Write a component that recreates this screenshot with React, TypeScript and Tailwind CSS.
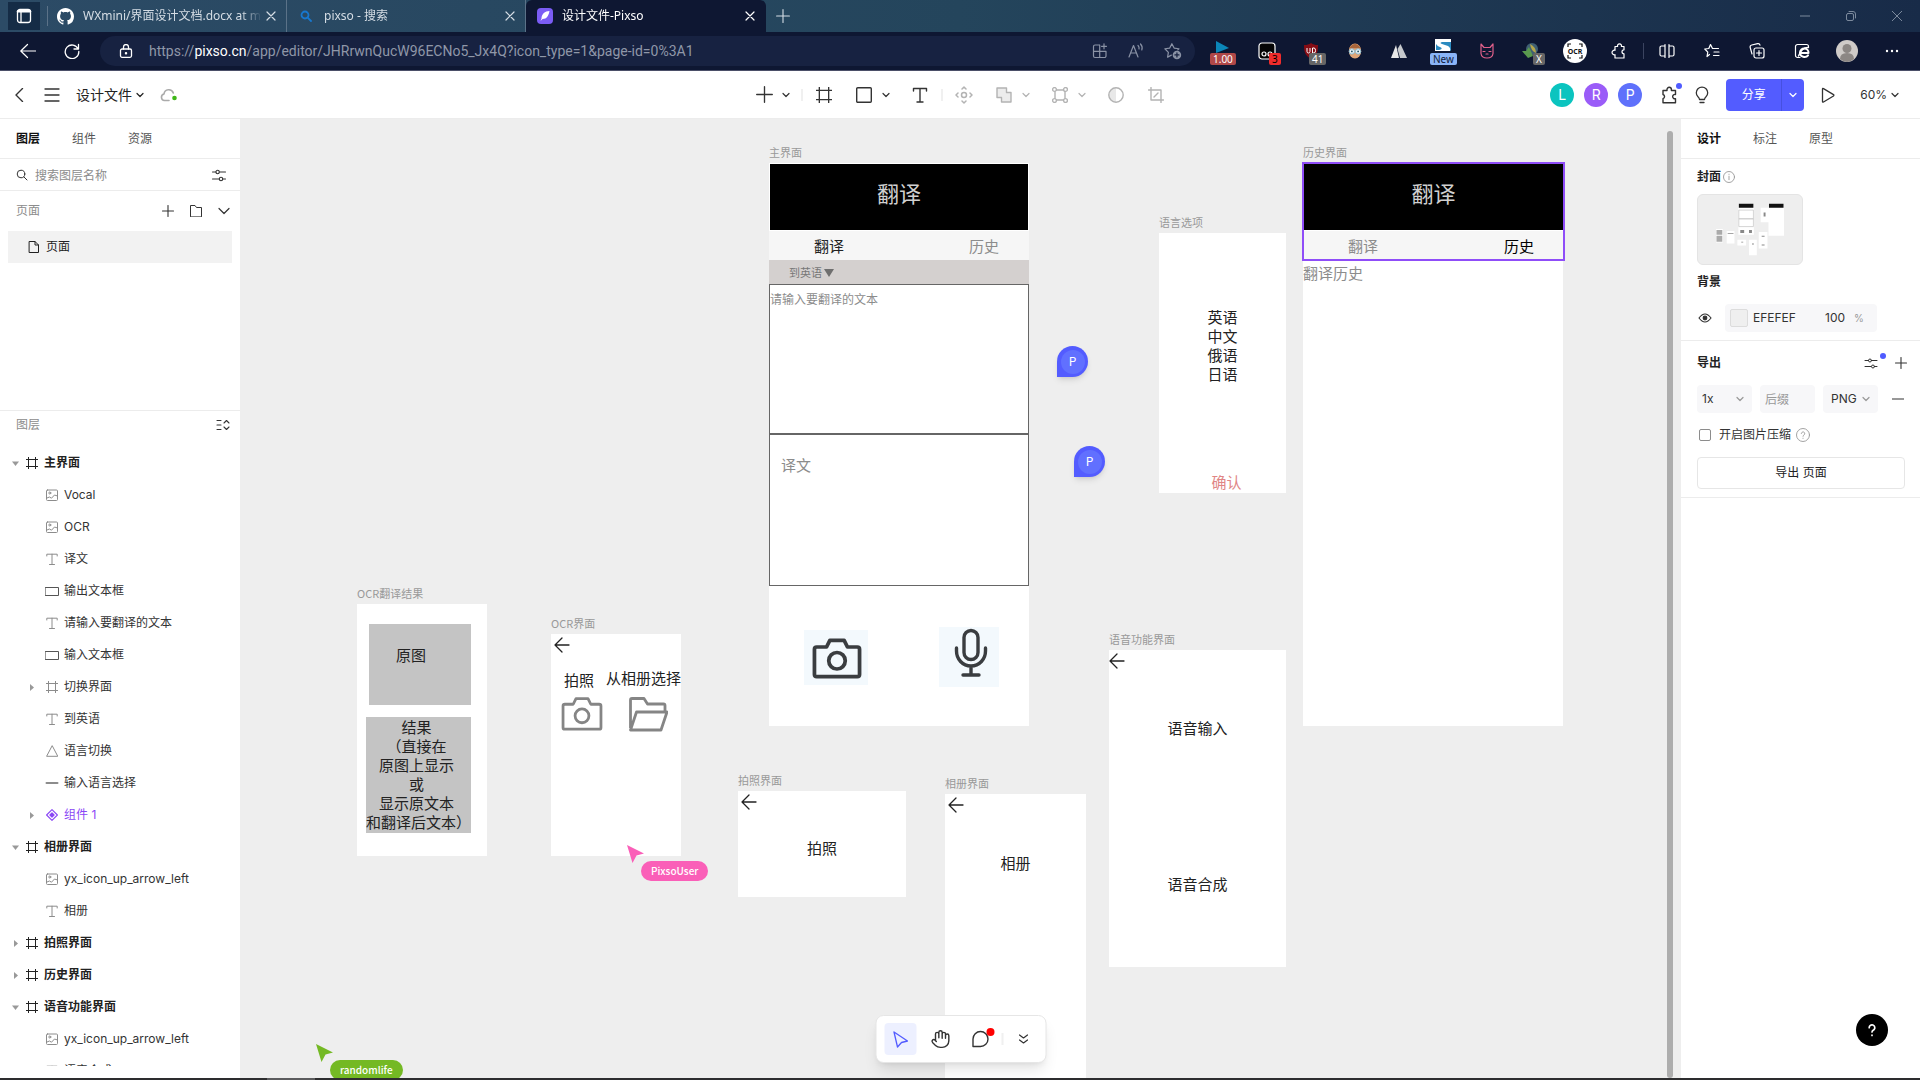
import React from "react";

type IconProps = { s?: number; vb?: number; sw?: number; className?: string; children: React.ReactNode };

function Icon({ s = 16, vb, sw = 1, className = "", children }: IconProps) {
  const v = vb ?? s;
  return (
    <svg
      width={s}
      height={s}
      viewBox={`0 0 ${v} ${v}`}
      fill="none"
      stroke="currentColor"
      strokeWidth={sw}
      strokeLinecap="round"
      strokeLinejoin="round"
      className={`shrink-0 ${className}`}
      aria-hidden="true"
    >
      {children}
    </svg>
  );
}

const Close = () => (
  <Icon s={10} sw={1.2}><path d="M1 1l8 8M9 1L1 9" /></Icon>
);
const Chevron = ({ className = "" }: { className?: string }) => (
  <Icon s={8} sw={1.2} className={className}><path d="M1 2.5l3 3 3-3" /></Icon>
);
const WideChevron = ({ className = "" }: { className?: string }) => (
  <Icon s={12} sw={1.2} className={className}><path d="M1 3.5l5 5 5-5" /></Icon>
);
const Plus = ({ s = 12 }: { s?: number }) => (
  <Icon s={s} vb={12} sw={s > 12 ? 0.95 : 1.1}><path d="M6 .5v11M.5 6h11" /></Icon>
);
const FrameIcon = ({ s = 12, sw = 1 }: { s?: number; sw?: number }) => (
  <Icon s={s} vb={12} sw={sw}><path d="M2.5 0v12M9.5 0v12M0 2.5h12M0 9.5h12" /></Icon>
);
const ImageIcon = () => (
  <Icon s={12}>
    <rect x=".5" y="1" width="11" height="10.5" rx="1" />
    <circle cx="3.8" cy="4" r="1" />
    <path d="M1 9l2.5-1 2 1.2 3-3.2 3 1" />
  </Icon>
);
const TextIcon = () => (
  <Icon s={12}><path d="M.8 3V1.2h10.4V3M6 1.2v10.3M3.5 11.5h5" /></Icon>
);
const RectIcon = () => (
  <Icon s={14} sw={1}><rect x=".5" y="3.500" width="13" height="8" /></Icon>
);
const TriIcon = () => (
  <Icon s={12}><path d="M6 1L.6 11.3h10.8z" /></Icon>
);
const LineIcon = () => (
  <Icon s={14} sw={2}><path d="M1.5 7h11" /></Icon>
);
const ComponentIcon = () => (
  <Icon s={12} sw={1.1}>
    <path d="M6 .6L11.4 6 6 11.4.6 6z" />
    <path d="M6 3.9L8.1 6 6 8.1 3.9 6z" fill="currentColor" />
  </Icon>
);
const SettingsIcon = () => (
  <Icon s={14} sw={1.1}>
    <path d="M.5 4H4M7.5 4h6M.5 11h6.700M10.700 11h2.800" />
    <circle cx="5.600" cy="4" r="1.700" />
    <circle cx="9" cy="11" r="1.700" />
  </Icon>
);
const BackArrow = ({ className = "" }: { className?: string }) => (
  <Icon s={16} sw={1.3} className={className}><path d="M15 8H1M8 1L1 8l7 7" /></Icon>
);
const PuzzleShape = () => (
  <path d="M5 4.500h2.600a2 2 0 113.800 0H14v3.300a2 2 0 100 4V16H5v-3.300a2.300 2.300 0 110-4.400z" />
);

/* ---------- browser chrome ---------- */

function Tab({ icon, title, active = false }: { icon: React.ReactNode; title: string; active?: boolean }) {
  return (
    <div
      className={
        active
          ? "flex h-8 w-60 items-center rounded-t-md bg-[#0e1732] pr-[11px] pl-[11px] text-white"
          : "flex h-8 w-[239px] items-center border-r border-[#5b7288] pr-[10px] pl-[9px] text-[#d5dde5]"
      }
    >
      {icon}
      <button className="ml-[9px] h-5 min-w-0 flex-1 overflow-hidden text-left text-xs leading-5 whitespace-nowrap [mask-image:linear-gradient(to_right,black_88%,transparent)]">
        {title}
      </button>
      <button aria-label="关闭标签页" className="ml-1"><Close /></button>
    </div>
  );
}

function Badge({ text, className }: { text: string; className: string }) {
  return (
    <span className={`absolute rounded-xs px-[3px] text-[10px] leading-[12px] ${className}`}>{text}</span>
  );
}

function Ext({ label, children }: { label: string; children: React.ReactNode }) {
  return (
    <button aria-label={label} className="relative flex h-[38px] w-11 items-center justify-center text-white">
      {children}
    </button>
  );
}

function BrowserChrome() {
  return (
    <header className="shrink-0 font-['Noto_Sans','Noto_Sans_CJK_SC',sans-serif]">
      <div className="flex h-8 items-center bg-linear-to-r from-[#2c4b66] via-[#24455c] to-[#182b48]">
        <button aria-label="标签页操作" className="ml-2 flex h-7 w-8 items-center justify-center bg-[#152c46] text-white">
          <Icon s={16} sw={1.3}>
            <rect x="1.500" y="1.500" width="13" height="13" rx="2.500" />
            <path d="M2 3.200h12" strokeWidth="2.400" />
            <path d="M5 4v10" />
          </Icon>
        </button>
        <span className="ml-[7px] h-5 w-px bg-[#5b7288]" />
        <Tab
          title="WXmini/界面设计文档.docx at m"
          icon={
            <svg width="17" height="17" viewBox="0 0 16 16" fill="white" aria-hidden="true" className="shrink-0">
              <path d="M8 0C3.580 0 0 3.580 0 8c0 3.540 2.290 6.530 5.470 7.590.4.070.550-.170.550-.380 0-.190-.010-.820-.010-1.490-2.010.370-2.530-.490-2.690-.940-.090-.230-.480-.940-.820-1.130-.280-.150-.680-.520-.010-.530.630-.010 1.080.580 1.230.820.720 1.210 1.870.870 2.330.660.070-.520.280-.870.510-1.070-1.780-.200-3.640-.890-3.640-3.950 0-.870.310-1.590.820-2.150-.080-.200-.360-1.020.080-2.120 0 0 .670-.210 2.200.820.640-.180 1.320-.270 2-.270s1.360.090 2 .270c1.530-1.040 2.200-.820 2.200-.820.440 1.100.160 1.920.080 2.120.510.560.820 1.270.820 2.150 0 3.070-1.870 3.750-3.650 3.950.290.250.540.730.540 1.480 0 1.070-.010 1.930-.010 2.200 0 .210.150.460.550.380A8.010 8.010 0 0016 8c0-4.420-3.580-8-8-8z" />
            </svg>
          }
        />
        <Tab
          title="pixso - 搜索"
          icon={
            <Icon s={12} sw={1.800} className="mx-[3px] ml-[4px] text-[#1878cf]">
              <circle cx="5" cy="5" r="3.500" />
              <path d="M7.700 7.700l3.300 3.300" />
            </Icon>
          }
        />
        <Tab
          active
          title="设计文件-Pixso"
          icon={
            <svg width="16" height="16" viewBox="0 0 16 16" aria-hidden="true" className="shrink-0">
              <rect width="16" height="16" rx="4" fill="#7b5cf5" />
              <path d="M12.500 3C8 3 4.500 6 4.500 10.500L3.500 13l2-2c4.500 0 6-3.500 7-8z" fill="white" />
            </svg>
          }
        />
        <button aria-label="新建标签页" className="ml-[10px] text-[#d5dde5]"><Plus s={14} /></button>
        <div className="ml-auto flex items-center gap-9 pr-[18px] text-[#7c8a9d]">
          <button aria-label="最小化"><Icon s={10}><path d="M0 5h10" /></Icon></button>
          <button aria-label="还原">
            <Icon s={10}><rect x=".5" y="2.500" width="7" height="7" rx="1.500" /><path d="M3 .5h4a2.500 2.500 0 012.500 2.500v4" /></Icon>
          </button>
          <button aria-label="关闭"><Icon s={10}><path d="M0 0l10 10M10 0L0 10" /></Icon></button>
        </div>
      </div>

      <div className="flex h-[39px] items-center border-b border-[#4b4f68] bg-[#0e1732] pr-[6px] text-white">
        <button aria-label="后退" className="ml-5"><Icon s={16} sw={1.200}><path d="M15.500 8H.8M7.500 1.500L.8 8l6.700 6.500" /></Icon></button>
        <button aria-label="刷新" className="ml-7"><Icon s={16} sw={1.300}><path d="M14.200 6A6.800 6.800 0 1014.800 8.500M14.500 1.500V6H10" /></Icon></button>
        <div className="ml-5 flex h-[30px] min-w-0 flex-1 items-center rounded-full bg-[#172241] pr-[13px] pl-[19px]">
          <Icon s={14} sw={1.300}>
            <rect x="1.500" y="5" width="11" height="8.300" rx="1.500" />
            <path d="M4.500 5V3a2.500 2.500 0 015 0v2" />
            <circle cx="7" cy="9.200" r=".6" fill="currentColor" />
          </Icon>
          <p className="ml-4 flex-1 truncate font-['Roboto',sans-serif] text-sm leading-5 text-[#8f97a8]">
            https://<span className="text-white">pixso.cn</span>/app/editor/JHRrwnQucW96ECNo5_Jx4Q?icon_type=1&amp;page-id=0%3A1
          </p>
          <div className="flex items-center gap-5 text-[#8a92a5]">
            <Icon s={16} sw={1.200}><path d="M7.500 2H3a1.500 1.500 0 00-1.500 1.500V13A1.500 1.500 0 003 14.500h9.500A1.500 1.500 0 0014 13V8.300H1.500M7.700 2v12.500M12 .8v5M9.500 3.300h5" /></Icon>
            <Icon s={16} sw={1.200}><path d="M1 14L5.500 2.500 10 14M2.600 10h5.800M10 2.500c1 1 1.300 2.300 1 3.500M12.500 1c1.700 1.800 2 4 1.300 6" /></Icon>
            <Icon s={18} vb={16} sw={1.100}>
              <path d="M6.500 11.700L3.200 13.500l.7-4.300L.8 6l4.300-.6L7 1.500l2 3.900 4.300.6-1 1" />
              <circle cx="11.500" cy="11.500" r="3.800" fill="#8a92a5" stroke="none" />
              <path d="M11.500 9.700v3.600M9.700 11.500h3.600" stroke="#172241" />
            </Icon>
          </div>
        </div>

        <div className="ml-[6px] flex">
          <Ext label="视频倍速">
            <svg width="14" height="12" viewBox="0 0 14 12" className="mb-2"><path d="M0 0l13 7-13 5z" fill="#0b86b8" /></svg>
            <Badge text="1.00" className="top-[21px] left-[9px] bg-[#b04848]" />
          </Ext>
          <Ext label="脚本管理">
            <Icon s={18} sw={1.200}>
              <rect x="1" y="1" width="16" height="16" rx="3" fill="#050505" />
              <circle cx="6" cy="12" r="2" /><circle cx="12" cy="12" r="2" />
            </Icon>
            <Badge text="3" className="top-[21px] left-6 bg-[#f02c2c] text-black" />
          </Ext>
          <Ext label="广告拦截">
            <svg width="16" height="16" viewBox="0 0 16 16">
              <path d="M8 0c2 1.500 4 2 7 2 0 6-.5 10-7 14C1.500 12 1 8 1 2c3 0 5-.5 7-2z" fill="#850c14" />
              <path d="M4 5v3.500q0 1.500 1.500 1.500T7 8.500V5M9.500 5v5h1.500q1.500 0 1.500-2.500T11 5z" fill="none" stroke="white" />
            </svg>
            <Badge text="41" className="top-[21px] left-5 bg-[#666]" />
          </Ext>
          <Ext label="护目镜">
            <svg width="16" height="16" viewBox="0 0 18 18">
              <ellipse cx="9" cy="9" rx="7" ry="8.500" fill="#e0a577" />
              <path d="M2.500 6Q9-4 15.500 6z" fill="#a8653a" />
              <circle cx="5.500" cy="9.500" r="3" fill="#eef4f6" stroke="#7fb4cc" /><circle cx="12.500" cy="9.500" r="3" fill="#eef4f6" stroke="#7fb4cc" />
              <circle cx="5.500" cy="9.500" r="1" fill="#256" /><circle cx="12.500" cy="9.500" r="1" fill="#256" />
            </svg>
          </Ext>
          <Ext label="山峰">
            <svg width="16" height="14" viewBox="0 0 16 14"><path d="M5 1l3 13H0z" fill="#e8e8e8" /><path d="M9.500 0L16 14H9L6.500 5z" fill="#c5c8cc" /></svg>
          </Ext>
          <Ext label="翻译助手">
            <svg width="16" height="12" viewBox="0 0 16 12" className="mb-3"><rect width="16" height="12" rx="1" fill="#2a8ac0" /><path d="M0 0h16v3H7q-3 1 0 2l6 2q3 2 2 5H0z" fill="#fff" /><path d="M1 5q1 2 5 3.500 2 1.500-2 2.500H1z" fill="#2a8ac0" /></svg>
            <Badge text="New" className="top-[21px] left-[9px] bg-[#8ab4f8] text-[#10203c]" />
          </Ext>
          <Ext label="猫抓">
            <Icon s={16} sw={1.200} className="text-[#e0608a]">
              <path d="M2 1l3 3.500h6L14 1v9.500Q13.500 15 8 15t-6-4.500zM4 8.500h2M10 8.500h2" />
              <path d="M7 11h2" />
            </Icon>
          </Ext>
          <Ext label="下载管理">
            <svg width="18" height="16" viewBox="0 0 18 16"><circle cx="10" cy="6" r="6" fill="#3f5f73" /><path d="M8 1q6 3 6 9-5-2-6-9" fill="#b5a64a" /><path d="M0 8h4L7 4l4 9-5 2z" fill="#5a9a4f" /></svg>
            <Badge text="X" className="top-[21px] left-6 bg-[#666]" />
          </Ext>
          <Ext label="文字识别">
            <span className="flex size-6 items-center justify-center rounded-full bg-white text-[#111]">
              <svg width="18" height="18" viewBox="0 0 18 18" fill="none" stroke="#111" strokeWidth="1.200">
                <path d="M2 5V2h3M13 2h3v3M16 13v3h-3M5 16H2v-3" />
                <text x="9" y="11.500" fontSize="7" fontWeight="700" textAnchor="middle" fill="#111" stroke="none">OCR</text>
              </svg>
            </span>
          </Ext>
          <Ext label="扩展"><Icon s={18} sw={1.200}><PuzzleShape /></Icon></Ext>
        </div>
        <span className="ml-[2px] h-4 w-px bg-[#3b4460]" />
        <div className="flex">
          {[
            ["分屏", <><path d="M6 3H2.500A1.500 1.500 0 001 4.500v7A1.500 1.500 0 002.500 13H6M10 3h3.500A1.500 1.500 0 0115 4.500v7a1.500 1.500 0 01-1.500 1.500H10M6 3v10M10 3v10M6 1.500v13M10 1.500v13" /></>],
            ["收藏夹", <><path d="M5.500 11.500L3 13.500l.8-4.300L.8 6l4-.5L6.500 1.500l2 4h6M10 9h5M9.500 12.500H15" /></>],
            ["集锦", <><rect x="5" y="5" width="10" height="10" rx="2" /><path d="M10 7.500v5M7.500 10h5M3 11L1.200 4.500A2 2 0 012.700 2l6-1.300A2 2 0 0111 2.200" /></>],
            ["IE 模式", <><path d="M6 14.500H3.500a2 2 0 01-2-2v-9a2 2 0 012-2h9a2 2 0 012 2" /><path d="M6 10h8.500a4.200 4.200 0 00-8.500-.5c0 5 6 5.500 8 2.800" strokeWidth="2" /><path d="M14.500 4.500Q8 4 4.500 13" strokeWidth="1.400" /></>],
          ].map(([label, d]) => (
            <button key={label as string} aria-label={label as string} className="flex h-[38px] w-[45px] items-center justify-center">
              <Icon s={16} sw={1.200}>{d}</Icon>
            </button>
          ))}
          <button aria-label="用户" className="flex h-[38px] w-[45px] items-center justify-center">
            <svg width="22" height="22" viewBox="0 0 22 22"><circle cx="11" cy="11" r="11" fill="#cfcbc8" /><circle cx="11" cy="8.500" r="4.500" fill="#8c8784" /><path d="M4 19q0-6 7-6t7 6q-7 6-14 0z" fill="#8c8784" /></svg>
          </button>
          <button aria-label="更多" className="flex h-[38px] w-[45px] items-center justify-center">
            <Icon s={14}><g fill="currentColor" stroke="none"><circle cx="2" cy="7" r="1.200" /><circle cx="7" cy="7" r="1.200" /><circle cx="12" cy="7" r="1.200" /></g></Icon>
          </button>
        </div>
      </div>
    </header>
  );
}

/* ---------- editor header ---------- */

function Tool({ label, children, className = "" }: { label: string; children: React.ReactNode; className?: string }) {
  return <button aria-label={label} className={`flex size-8 items-center justify-center ${className}`}>{children}</button>;
}
function ToolMenu({ label }: { label: string }) {
  return <button aria-label={label} className="flex w-3 justify-center"><Chevron /></button>;
}

function Avatar({ letter, className }: { letter: string; className: string }) {
  return <span className={`flex size-6 items-center justify-center rounded-full text-sm text-white ${className}`}>{letter}</span>;
}

function EditorHeader() {
  return (
    <div className="grid h-12 shrink-0 grid-cols-[1fr_auto_1fr] items-center border-b border-[#ececec] bg-white text-[#333]">
      <div className="flex items-center pl-[13px]">
        <button aria-label="返回"><Icon s={14} sw={1.400}><path d="M9.500.5L3 7l6.500 6.500" /></Icon></button>
        <button aria-label="菜单" className="ml-[17px]"><Icon s={16} sw={1.300}><path d="M1 2h14M1 8h14M1 14h14" /></Icon></button>
        <button className="ml-4 flex items-center gap-1 text-sm leading-5 text-[#222]">设计文件 <Chevron /></button>
        <Icon s={18} sw={1.600} className="ml-4 text-[#aaa]">
          <path d="M9 14.500H4.500A3.300 3.300 0 014 8a4.800 4.800 0 019.300-1" />
          <circle cx="14.500" cy="12" r="2.300" fill="#3fb618" stroke="none" />
        </Icon>
      </div>
      <div className="flex items-center">
        <Tool label="添加"><Plus s={17} /></Tool><ToolMenu label="添加选项" />
        <span className="mx-[9px] mr-[5px] h-3 w-[2px] bg-[#f0f0f0]" />
        <Tool label="画板"><FrameIcon s={16} sw={1} /></Tool>
        <Tool label="矩形" className="ml-2"><Icon s={16} sw={1.400}><rect x=".7" y=".7" width="14.600" height="14.600" rx="1" /></Icon></Tool><ToolMenu label="形状选项" />
        <Tool label="文本" className="ml-3"><Icon s={16} sw={1.400}><path d="M1.500 4V1.500h13V4M8 1.500v13.500M5 15h6" /></Icon></Tool>
        <span className="mx-[5px] h-3 w-[2px] bg-[#f0f0f0]" />
        <div className="flex items-center text-[#b3b3b3]">
          <Tool label="组件"><Icon s={18} sw={1.500}><circle cx="9" cy="9" r="2.500" /><path d="M7 3l2-2 2 2M7 15l2 2 2-2M3 7L1 9l2 2M15 7l2 2-2 2" /></Icon></Tool>
          <Tool label="布尔运算" className="ml-2"><Icon s={16} sw={1.400}><path d="M1 1h9.500v4.500H15V15H5.500v-4.500H1z" fill="#ececec" /></Icon></Tool><ToolMenu label="布尔运算选项" />
          <Tool label="编辑对象" className="ml-3"><Icon s={16} sw={1.400}><path d="M3 4v8M13 4v8M4 3h8M4 13h8" /><g fill="white"><circle cx="2.500" cy="2.500" r="1.900" /><circle cx="13.500" cy="2.500" r="1.900" /><circle cx="2.500" cy="13.500" r="1.900" /><circle cx="13.500" cy="13.500" r="1.900" /></g></Icon></Tool><ToolMenu label="编辑选项" />
          <Tool label="蒙版" className="ml-3"><Icon s={16} sw={1.400}><path d="M8 1a7 7 0 000 14z" fill="#e8e8e8" stroke="none" /><circle cx="8" cy="8" r="7.200" /></Icon></Tool>
          <Tool label="裁剪" className="ml-2"><Icon s={16} sw={1.400}><path d="M3 .5V13h12.500M.5 3H13v12.500M6 10l4-4" /></Icon></Tool>
        </div>
      </div>
      <div className="flex items-center justify-end pr-[21px]">
        <div className="flex gap-[10px]">
          <Avatar letter="L" className="bg-[#0bc4bf]" />
          <Avatar letter="R" className="bg-[#9a5cf8]" />
          <Avatar letter="P" className="bg-[#5f71fb]" />
        </div>
        <button aria-label="插件" className="relative ml-[19px]">
          <Icon s={18} sw={1.400}><path d="M2 4.500h4V3.500a2.200 2.200 0 014.400 0v1h4.100v4a2.200 2.200 0 100 4.200v4H2v-4a2.200 2.200 0 000-4.200z" /></Icon>
          <span className="absolute -top-[3px] -right-[3px] size-[6px] rounded-full bg-[#4f5bff]" />
        </button>
        <button aria-label="提示" className="ml-[14px]">
          <Icon s={18} sw={1.300}><path d="M6.500 13.500Q6.300 12 5 10.800a5.700 5.700 0 118 0Q11.700 12 11.500 13.500zM7 16.500h4" /></Icon>
        </button>
        <div className="ml-[15px] flex h-8 overflow-hidden rounded bg-[#535cff] text-white">
          <button className="w-[55px] text-xs">分享</button>
          <button aria-label="分享选项" className="flex w-[23px] items-center justify-center border-l border-[#4650e0]"><Chevron /></button>
        </div>
        <button aria-label="演示" className="ml-4"><Icon s={16} sw={1.300}><path d="M2.500 2v12.500q0 1 1 .5l10-6q.8-.7 0-1.400l-10-6q-1-.5-1 .4z" /></Icon></button>
        <button className="ml-6 flex items-center gap-1 text-xs leading-4">60%<Chevron /></button>
      </div>
    </div>
  );
}

/* ---------- left panel ---------- */

type Layer = { name: string; kind: string; root?: boolean; open?: boolean; closed?: boolean };
const layers: Layer[] = [
  { name: "主界面", kind: "frame", root: true, open: true },
  { name: "Vocal", kind: "image" },
  { name: "OCR", kind: "image" },
  { name: "译文", kind: "text" },
  { name: "输出文本框", kind: "rect" },
  { name: "请输入要翻译的文本", kind: "text" },
  { name: "输入文本框", kind: "rect" },
  { name: "切换界面", kind: "frame", closed: true },
  { name: "到英语", kind: "text" },
  { name: "语言切换", kind: "tri" },
  { name: "输入语言选择", kind: "line" },
  { name: "组件 1", kind: "component", closed: true },
  { name: "相册界面", kind: "frame", root: true, open: true },
  { name: "yx_icon_up_arrow_left", kind: "image" },
  { name: "相册", kind: "text" },
  { name: "拍照界面", kind: "frame", root: true, closed: true },
  { name: "历史界面", kind: "frame", root: true, closed: true },
  { name: "语音功能界面", kind: "frame", root: true, open: true },
  { name: "yx_icon_up_arrow_left", kind: "image" },
  { name: "语音合成", kind: "text" },
];
const kindIcon: Record<string, React.ReactNode> = {
  frame: <FrameIcon />,
  image: <ImageIcon />,
  text: <TextIcon />,
  rect: <RectIcon />,
  tri: <TriIcon />,
  line: <LineIcon />,
  component: <ComponentIcon />,
};

function LayerRow({ layer }: { layer: Layer }) {
  const { root, open, closed, kind, name } = layer;
  const comp = kind === "component";
  return (
    <li className={`flex h-8 items-center ${root ? "pl-3" : "pl-[28px]"}`}>
      <span className="flex w-3 text-[#999]">
        {open && <svg width="7" height="5" viewBox="0 0 7 5"><path d="M0 .5h7L3.500 5z" fill="currentColor" /></svg>}
        {closed && <svg width="7" height="7" viewBox="0 0 7 7"><path d="M2 0l4 3.500L2 7z" fill="currentColor" /></svg>}
      </span>
      <span className={`flex w-4 justify-center ${comp ? "text-[#8a46f5]" : root ? "text-[#222]" : kind === "rect" ? "text-[#555]" : "text-[#8c8c8c]"} ${root ? "" : "ml-1"}`}>
        {kindIcon[kind]}
      </span>
      <button className={`ml-1 text-xs leading-4 ${root ? "font-bold text-[#222]" : comp ? "text-[#8a46f5]" : "text-[#333]"}`}>{name}</button>
    </li>
  );
}

function LeftPanel() {
  return (
    <aside className="flex w-60 shrink-0 flex-col bg-white text-xs leading-4 text-[#333]">
      <nav className="flex h-10 shrink-0 items-center gap-8 border-b border-[#ececec] pl-4 text-[#555]">
        <button className="font-bold text-[#111]">图层</button>
        <button>组件</button>
        <button>资源</button>
      </nav>
      <div className="flex h-8 shrink-0 items-center border-b border-[#ececec] pr-[14px] pl-4">
        <Icon s={12}><circle cx="5" cy="5" r="3.800" /><path d="M8 8l3 3" /></Icon>
        <input aria-label="搜索图层名称" placeholder="搜索图层名称" className="ml-[7px] min-w-0 flex-1 pt-[2px] outline-none placeholder:text-[#8c8c8c]" />
        <button aria-label="筛选"><SettingsIcon /></button>
      </div>
      <section className="h-[220px] shrink-0 border-b border-[#ececec]">
        <div className="flex h-10 items-center pr-[10px] pl-4">
          <h2 className="flex-1 text-[#8c8c8c]">页面</h2>
          <button aria-label="新建页面" className="mr-4"><Plus s={12} /></button>
          <button aria-label="新建文件夹" className="mr-4"><Icon s={12}><path d="M.5 11.500v-11h4.500l1.500 2h5v9z" /></Icon></button>
          <button aria-label="折叠"><WideChevron /></button>
        </div>
        <button className="mx-2 flex h-8 w-[224px] items-center gap-[6px] bg-[#f2f2f2] pl-5 text-[#222]">
          <Icon s={12}><path d="M1.500.5H7l3.500 3.500v7.500h-9zM7 .5V4h3.500" /></Icon>
          页面
        </button>
      </section>
      <div className="flex h-9 shrink-0 items-center pr-[10px] pb-2 pl-4">
        <h2 className="flex-1 text-[#8c8c8c]">图层</h2>
        <button aria-label="全部折叠"><Icon s={14} sw={1.100}><path d="M1 2.500h4M1 7h4M1 11.500h4M8 5l2.500-2.500L13 5M8 9l2.500 2.500L13 9" /></Icon></button>
      </div>
      <ul className="mb-3 min-h-0 flex-1 overflow-hidden">
        {layers.map((l, i) => <LayerRow key={i} layer={l} />)}
      </ul>
    </aside>
  );
}

/* ---------- canvas ---------- */

function Artboard({ label, place, body, children }: { label: string; place: string; body: string; children: React.ReactNode }) {
  return (
    <section className={`absolute ${place}`}>
      <h3 className="h-5 text-[11px] leading-[18px] whitespace-nowrap text-[#999]">{label}</h3>
      <div className={`bg-white ${body}`}>{children}</div>
    </section>
  );
}

function AppBar({ history = false }: { history?: boolean }) {
  return (
    <>
      <div className="mx-px mb-px h-[67px] border-t border-white bg-black pt-[13px] text-center text-[22px] leading-[30px] text-[#d0d0d0]">翻译</div>
      <div className={`flex h-[29px] items-center justify-between bg-[#f6f6f6] pr-[30px] pl-[45px] ${history ? "text-[#8c8c8c]" : "text-[#222]"}`}>
        <span>翻译</span>
        <span className={history ? "text-black" : "text-[#8c8c8c]"}>历史</span>
      </div>
    </>
  );
}

function CommentPin({ place }: { place: string }) {
  return (
    <button className={`absolute flex size-[31px] items-center justify-center rounded-full rounded-bl-none bg-[#535cff] shadow-md ${place}`}>
      <span className="flex size-6 items-center justify-center rounded-full bg-[#6170ff] pb-[2px] text-xs leading-4 text-white">P</span>
    </button>
  );
}

function RemoteCursor({ name, place, pill, arrow }: { name: string; place: string; pill: string; arrow: string }) {
  return (
    <div className={`absolute ${place}`}>
      <svg width="17" height="19" viewBox="0 0 17 19" className={arrow} aria-hidden="true"><path d="M0 0l17 8.500-7.500 2L5.500 18z" fill="currentColor" /></svg>
      <span className={`-mt-[3px] ml-[14px] block h-5 rounded-full px-[10px] text-[10px] leading-[19px] font-medium text-white ${pill}`}>{name}</span>
    </div>
  );
}

const CameraShape = () => (
  <>
    <path d="M4 10h9l3-6h13l3 6h9q2 0 2 2v23q0 2-2 2H4q-2 0-2-2V12q0-2 2-2z" />
    <circle cx="22.500" cy="22.500" r="7.500" />
  </>
);

function Canvas() {
  return (
    <main className="relative min-w-0 flex-1 overflow-hidden bg-[#eeeeee] font-['Noto_Sans_CJK_SC',sans-serif] text-[15px] leading-[19px] text-[#222]">
      <Artboard label="主界面" place="left-[529px] top-6" body="h-[563px] w-[260px]">
        <AppBar />
        <div className="flex h-6 items-center gap-[2px] bg-[#d4d0cf] pt-px pl-5 text-[11px] text-[#777]">
          到英语
          <svg width="10" height="8" viewBox="0 0 10 8" aria-hidden="true"><path d="M0 0h10L5 8z" fill="#6f6f6f" /></svg>
        </div>
        <div className="h-[150px] border border-[#666] pt-1 text-xs leading-5 text-[#8c8c8c]">请输入要翻译的文本</div>
        <div className="h-[152px] border border-[#666] pt-5 pl-[11px] leading-5 text-[#8c8c8c]">译文</div>
        <div className="flex items-center justify-between pt-[41px] pr-[30px] pl-[35px]">
          <div className="flex h-[55px] w-16 items-center justify-center bg-[#f3f9fd] text-[#3a3d40]">
            <svg width="50" height="44" viewBox="0 0 45 40" fill="none" stroke="currentColor" strokeWidth="3.400" strokeLinejoin="round" className="mt-[2px] ml-[2px]"><CameraShape /></svg>
          </div>
          <div className="flex size-[60px] justify-center bg-[#f3f9fd] pt-[1px] text-[#3a3d40]">
            <svg width="34" height="50" viewBox="0 0 34 50" fill="none" stroke="currentColor" strokeWidth="3.400" strokeLinecap="round" className="ml-[3px]">
              <rect x="10" y="2.500" width="14" height="29" rx="7" />
              <path d="M2.500 20v3c0 8 6 15 14.500 15s14.500-7 14.500-15v-3M17 38v8M9 47h16" />
            </svg>
          </div>
        </div>
      </Artboard>

      <Artboard label="语言选项" place="left-[919px] top-[94px]" body="flex h-[260px] w-[127px] flex-col items-center pt-[74px] pb-[2px]">
        <p>英语</p><p>中文</p><p>俄语</p><p>日语</p>
        <button className="mt-auto pl-2 text-[#e08585]">确认</button>
      </Artboard>

      <Artboard label="历史界面" place="left-[1063px] top-6" body="h-[563px] w-[260px]">
        <div className="-mr-px outline-2 -outline-offset-1 outline-[#8f4df8]"><AppBar history /></div>
        <p className="pt-[3px] text-[#8c8c8c]">翻译历史</p>
      </Artboard>

      <Artboard label="OCR翻译结果" place="left-[117px] top-[465px]" body="h-[252px] w-[130px] pt-5 pr-4 pl-[9px]">
        <div className="ml-[3px] h-[81px] bg-[#c4c4c4] pt-[21px] pl-[27px]">原图</div>
        <div className="mt-3 h-[116px] bg-[#c4c4c4] pr-1">
          <p className="text-center whitespace-nowrap">结果<br />（直接在<br />原图上显示<br />或<br />显示原文本<br />和翻译后文本）</p>
        </div>
      </Artboard>

      <Artboard label="OCR界面" place="left-[311px] top-[495px]" body="h-[222px] w-[130px] pt-[3px]">
        <BackArrow className="ml-[3px]" />
        <div className="mt-[15px] flex justify-between whitespace-nowrap">
          <div className="flex flex-col items-start pt-[2px] pl-[10px]">
            <span className="ml-[3px]">拍照</span>
            <svg width="42" height="37" viewBox="0 0 45 40" fill="none" stroke="#858585" strokeWidth="3" strokeLinejoin="round" className="mt-[6px]"><CameraShape /></svg>
          </div>
          <div className="-ml-2 flex flex-col items-center">
            <span>从相册选择</span>
            <svg width="40" height="36" viewBox="0 0 40 36" fill="none" stroke="#858585" strokeWidth="2.800" strokeLinejoin="round" className="mt-[10px] ml-[10px]"><path d="M2.500 31V3q0-1.500 1.500-1.500h12l3.500 5.500h16q1.500 0 1.500 1.500V15M2.500 33L8.500 15H39l-6 18z" /></svg>
          </div>
        </div>
      </Artboard>

      <Artboard label="拍照界面" place="left-[498px] top-[652px]" body="h-[106px] w-[168px] pt-[3px]">
        <BackArrow className="ml-[3px]" />
        <p className="mt-[28px] text-center">拍照</p>
      </Artboard>

      <Artboard label="相册界面" place="left-[705px] top-[655px]" body="h-[290px] w-[141px] pt-[3px]">
        <BackArrow className="ml-[3px]" />
        <p className="mt-[40px] text-center">相册</p>
      </Artboard>

      <Artboard label="语音功能界面" place="left-[869px] top-[511px]" body="h-[317px] w-[177px] pt-[3px]">
        <BackArrow />
        <p className="mt-[49px] text-center">语音输入</p>
        <p className="mt-[137px] text-center">语音合成</p>
      </Artboard>

      <CommentPin place="left-[817px] top-[227px]" />
      <CommentPin place="left-[834px] top-[327px]" />
      <RemoteCursor name="PixsoUser" place="left-[387px] top-[726px]" pill="bg-[#fa5fb8]" arrow="text-[#fa5fb8]" />
      <RemoteCursor name="randomlife" place="left-[76px] top-[925px]" pill="bg-[#74b924]" arrow="text-[#74b924]" />

      <div className="absolute top-3 right-2 bottom-0 w-[6px] rounded-full bg-[#adadad]" />

      <div className="absolute bottom-[15px] left-1/2 flex h-12 -translate-x-1/2 items-center rounded-lg border border-[#e6e6e6] bg-white pr-[6px] pl-2 text-[#333] shadow-lg">
        <button aria-label="选择" className="flex size-8 items-center justify-center rounded bg-[#edf0ff] text-[#535cff]">
          <Icon s={18} sw={1.300}><path d="M2.500 2l13.500 9-6 1.500L6 17z" /></Icon>
        </button>
        <button aria-label="抓手" className="ml-2 flex size-8 items-center justify-center">
          <Icon s={20} vb={24} sw={1.700}>
            <path d="M18 11V6a2 2 0 00-4 0v5M14 10V4a2 2 0 00-4 0v6M10 10.500V6a2 2 0 00-4 0v8M18 8a2 2 0 114 0v6a8 8 0 01-8 8h-2c-2.800 0-4.500-.860-5.990-2.340l-3.600-3.600a2 2 0 012.830-2.820L7 15" />
          </Icon>
        </button>
        <button aria-label="评论" className="relative ml-2 flex size-8 items-center justify-center">
          <Icon s={18} sw={1.400}><path d="M1.500 16.500V9A7.500 7.500 0 119 16.500z" /></Icon>
          <span className="absolute top-[5px] right-[2px] size-2 rounded-full bg-[#ff0000]" />
        </button>
        <span className="ml-[5px] h-3 w-[2px] bg-[#f0f0f0]" />
        <button aria-label="更多工具" className="ml-1 flex size-8 items-center justify-center">
          <Icon s={12} sw={1.200}><path d="M2 2l4 3 4-3M2 7l4 3 4-3" /></Icon>
        </button>
      </div>
    </main>
  );
}

/* ---------- right panel ---------- */

function Thumb() {
  return (
    <svg viewBox="0 0 106 71" className="block h-[69px] w-full" aria-hidden="true">
      <g fill="#fff">
        <path d="M41 9h16v32H41zM72 9h16v33H72zM64 13h8v15h-8zM29 37h8v13h-8zM18 35h7v14h-7zM40 46h9v6h-9zM52 46h8v16h-8zM62 38h9v17h-9z" />
      </g>
      <path d="M41.500 9h15v4h-15zM72.500 9h15v4h-15z" fill="#111" />
      <path d="M41.500 15.500h15v9h-15zM41.500 24.500h15v8h-15z" fill="none" stroke="#c9c9c9" strokeWidth=".8" />
      <path d="M18.500 36h6v5h-6zM18.500 42h6v6h-6z" fill="#aaa" />
      <path d="M43 36h4v3h-4zM52 36h3v3h-3zM67 18h2v4h-2zM44 48h2v1h-2zM55 50h2v1h-2zM65 42h3v1h-3zM65 51h3v1h-3zM30 39h6v1h-6z" fill="#888" />
    </svg>
  );
}

function RightPanel() {
  return (
    <aside className="relative w-[239px] shrink-0 bg-white text-xs leading-4 text-[#333]">
      <nav className="flex h-10 items-center gap-8 border-b border-[#ececec] pl-4 text-[#555]">
        <button className="font-bold text-[#111]">设计</button>
        <button>标注</button>
        <button>原型</button>
      </nav>
      <section className="border-b border-[#ececec] px-4 pt-[10px] pb-2">
        <h2 className="flex items-center gap-[2px] font-bold text-[#222]">
          封面
          <Icon s={12} sw={0.900} className="text-[#999]"><circle cx="6" cy="6" r="5.500" /><path d="M6 5.200v3.500M6 3.200v.2" /></Icon>
        </h2>
        <div className="mt-[9px] w-[106px] overflow-hidden rounded-md border border-[#e4e4e4] bg-[#eeeeee]"><Thumb /></div>
        <h2 className="mt-[9px] font-bold text-[#222]">背景</h2>
        <div className="mt-[14px] flex items-center">
          <button aria-label="显示背景" className="flex w-4 justify-center">
            <Icon s={14} sw={1.200}><path d="M1 7q6-8 12 0-6 8-12 0z" /><circle cx="7" cy="7" r="1.800" fill="currentColor" /></Icon>
          </button>
          <div className="ml-3 flex h-7 w-[152px] items-center rounded bg-[#f7f7f9] pl-[5px]">
            <span className="size-[18px] rounded-xs border border-[#dcdcdc] bg-[#efefef]" />
            <input aria-label="背景颜色" defaultValue="EFEFEF" className="ml-[5px] w-[72px] outline-none" />
            <input aria-label="不透明度" defaultValue="100" className="w-[29px] outline-none" />
            <span className="text-[10px] text-[#999]">%</span>
          </div>
        </div>
      </section>
      <section className="border-b border-[#ececec] pt-[14px] pr-[15px] pb-2 pl-4">
        <div className="-mr-[2px] flex items-center">
          <h2 className="flex-1 font-bold text-[#222]">导出</h2>
          <button aria-label="导出设置" className="relative mr-[17px]">
            <Icon s={14} sw={1}>
              <path d="M1 4.500h3.500M7.500 4.500H13M1 10.500h6M10.500 10.500H13" /><circle cx="6" cy="4.500" r="1.500" /><circle cx="9" cy="10.500" r="1.500" />
            </Icon>
            <span className="absolute -top-[3px] -right-2 size-[6px] rounded-full bg-[#4f5bff]" />
          </button>
          <button aria-label="添加导出"><Plus s={12} /></button>
        </div>
        <div className="mt-[14px] flex items-center gap-2">
          <div className="relative w-[55px]">
            <select aria-label="倍率" className="h-7 w-full appearance-none rounded bg-[#f7f7f9] pl-[5px]"><option>1x</option></select>
            <Chevron className="pointer-events-none absolute top-[10px] right-2 text-[#999]" />
          </div>
          <input aria-label="后缀" placeholder="后缀" className="h-7 w-[55px] rounded bg-[#f7f7f9] pl-[5px] outline-none placeholder:text-[#999]" />
          <div className="relative w-[55px]">
            <select aria-label="格式" className="h-7 w-full appearance-none rounded bg-[#f7f7f9] pl-2"><option>PNG</option></select>
            <Chevron className="pointer-events-none absolute top-[10px] right-2 text-[#999]" />
          </div>
          <button aria-label="移除导出" className="ml-[6px]"><Icon s={12} sw={1.200}><path d="M.5 6h11" /></Icon></button>
        </div>
        <label className="mt-[14px] flex items-center">
          <input type="checkbox" className="ml-[2px] size-3 appearance-none rounded-xs border border-[#8c8c8c]" />
          <span className="ml-2">开启图片压缩</span>
          <Icon s={14} sw={0.900} className="ml-[5px] text-[#999]"><circle cx="7" cy="7" r="6.500" /><path d="M5.300 5.500a1.700 1.700 0 113 1.200Q7 7.500 7 8.300M7 10.200v.2" /></Icon>
        </label>
        <button className="mt-[14px] h-8 w-full rounded border border-[#e6e6e6] text-[#222]">导出 页面</button>
      </section>
      <button aria-label="帮助" className="absolute right-8 bottom-8 flex size-8 items-center justify-center rounded-full bg-black text-white">
        <Icon s={16} sw={1.700}><path d="M5.200 5.700a2.800 2.800 0 115 1.700Q8 8.700 8 10M8 13.200v.2" /></Icon>
      </button>
    </aside>
  );
}

export default function App() {
  return (
    <div className="flex h-screen flex-col overflow-hidden bg-white font-['Inter','Noto_Sans_CJK_SC',sans-serif]">
      <BrowserChrome />
      <EditorHeader />
      <div className="flex min-h-0 flex-1">
        <LeftPanel />
        <Canvas />
        <RightPanel />
      </div>
      <div className="h-[2px] shrink-0 bg-[#2d2d2f]">
        <div className="ml-[267px] h-full w-12 bg-[#5c5c5e]" />
      </div>
    </div>
  );
}
